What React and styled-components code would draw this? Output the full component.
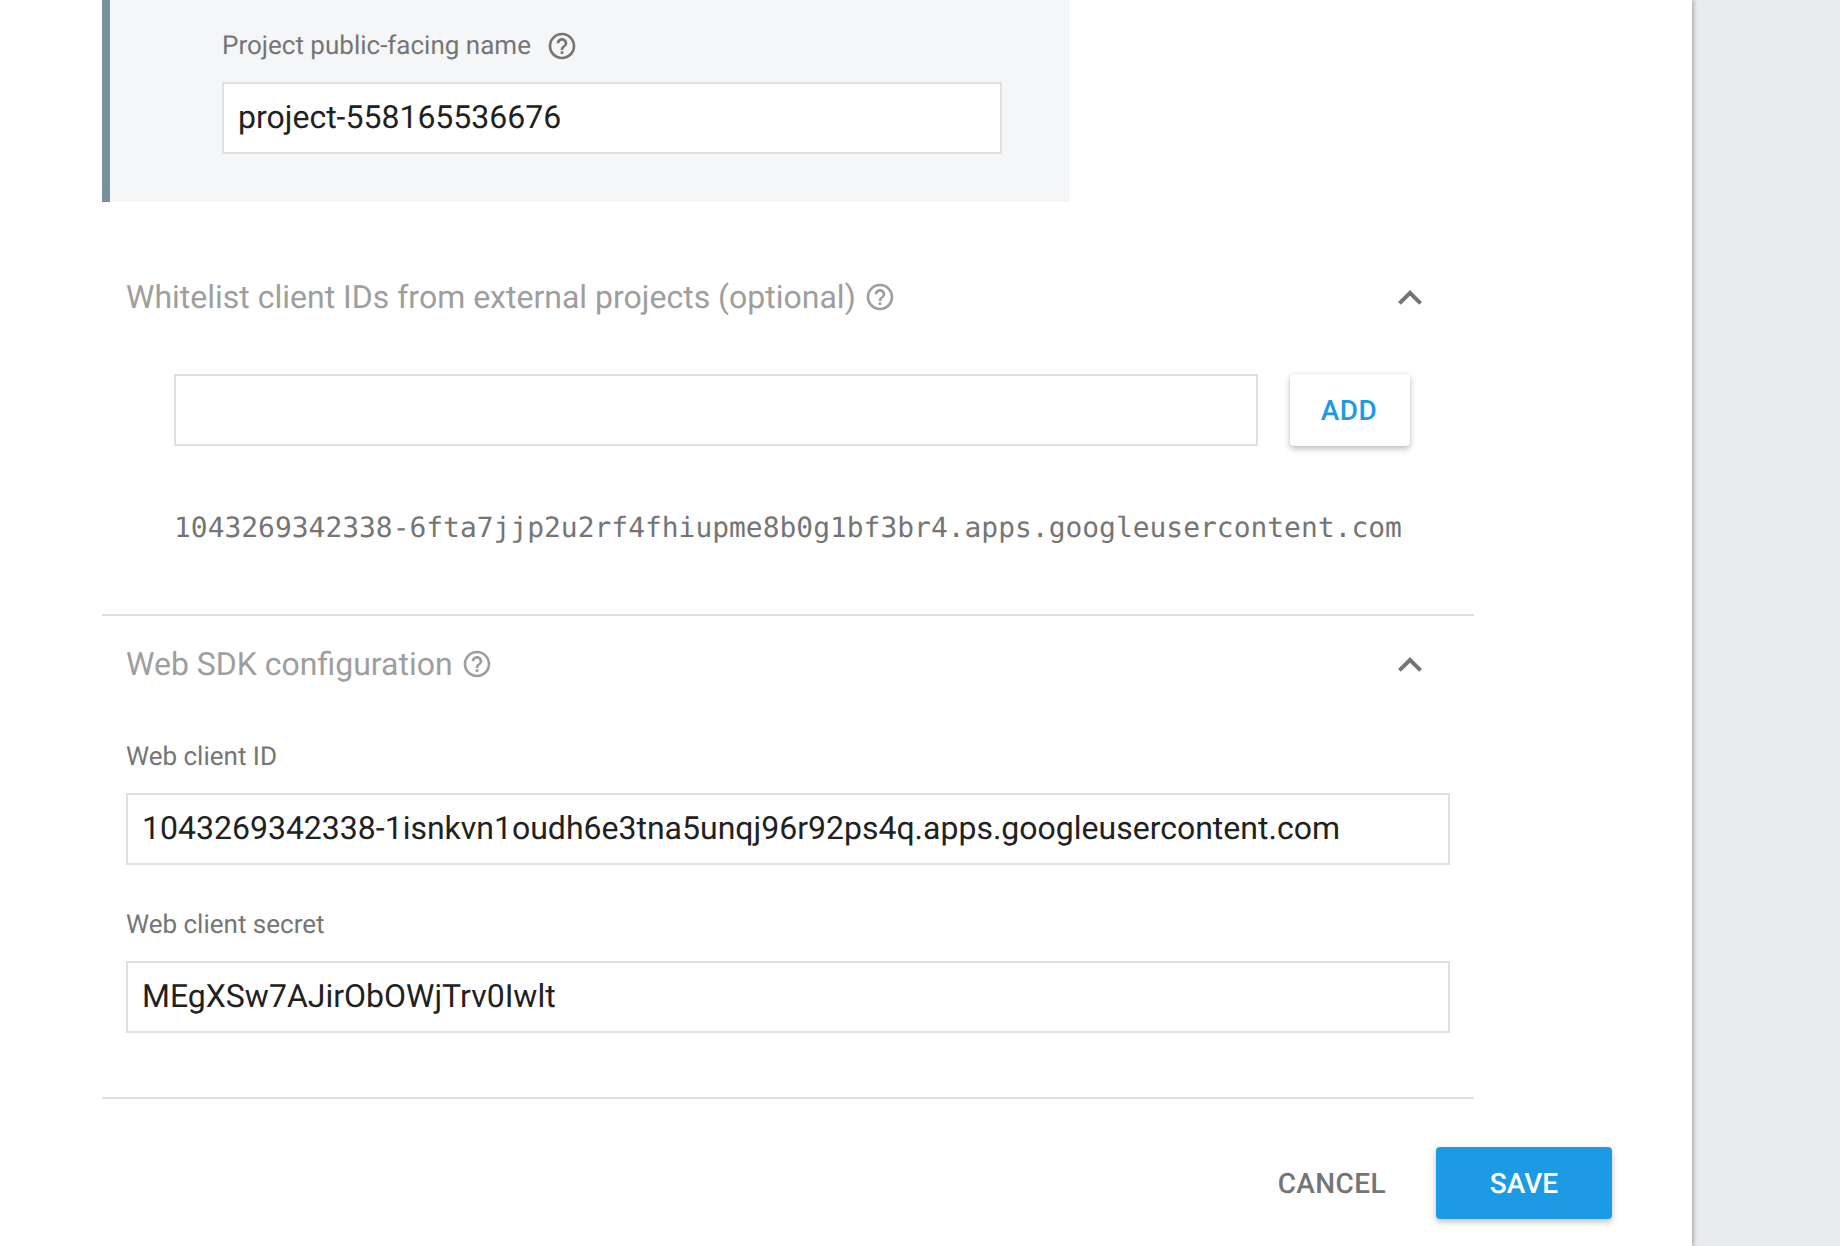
import React from "react";
import styled, { createGlobalStyle } from "styled-components";
import { MdHelpOutline, MdExpandLess } from "react-icons/md";

const Global = createGlobalStyle`
  html, body { margin: 0; padding: 0; height: 100%; background: #e8ecef; overflow: hidden; }
  body {
    font-family: Roboto, "Liberation Sans", sans-serif;
    text-rendering: geometricPrecision;
  }
`;

const Page = styled.div`
  display: flex;
  height: 1246px;
  background: #e8ecef;
`;

const Sheet = styled.main`
  width: 1692px;
  height: 1246px;
  box-sizing: border-box;
  padding-left: 102px;
  background: #fff;
  box-shadow: 2px 0 4px rgba(0, 0, 0, 0.25);
  display: flex;
  flex-direction: column;
`;

const NamePanel = styled.section`
  width: 968px;
  height: 202px;
  box-sizing: border-box;
  padding: 28px 0 0 112px;
  background: #f5f6f8;
  border-left: 8px solid #78909c;
`;

const FieldLabel = styled.label`
  display: flex;
  align-items: center;
  gap: 15px;
  height: 36px;
  font-size: 26px;
  line-height: 36px;
  color: #757575;
  margin-bottom: ${(p) => p.$gap ?? 18}px;
`;

const HelpIcon = styled(MdHelpOutline)`
  width: 32px;
  height: 32px;
  color: #757575;
  flex: none;
`;

const TextBox = styled.div`
  box-sizing: border-box;
  width: ${(p) => p.$width}px;
  height: 72px;
  padding: 0 14px 2px;
  display: flex;
  align-items: center;
  background: #fff;
  border: 2px solid #e0e0e0;
  font-size: 32px;
  color: #212121;
  white-space: nowrap;
`;

const Section = styled.section`
  width: 1372px;
  box-sizing: border-box;
  padding: ${(p) => p.$top}px 0 0 24px;
  height: ${(p) => p.$height}px;
  border-bottom: 2px solid #e0e0e0;
`;

const SectionHead = styled.header`
  display: flex;
  align-items: center;
  height: 48px;
  width: 1308px;
`;

const SectionTitle = styled.h2`
  margin: 0;
  font-size: 32px;
  font-weight: 400;
  line-height: 48px;
  color: #9e9e9e;
  white-space: nowrap;
`;

const TitleHelp = styled(MdHelpOutline)`
  width: 32px;
  height: 32px;
  margin-left: 8px;
  color: #9e9e9e;
  flex: none;
`;

const Chevron = styled(MdExpandLess)`
  width: 48px;
  height: 48px;
  margin-left: auto;
  position: relative;
  top: 1px;
  color: #757575;
  flex: none;
`;

const AddRow = styled.div`
  display: flex;
  align-items: center;
  gap: 32px;
  margin: 53px 0 0 48px;
`;

const AddButton = styled.button`
  width: 120px;
  height: 72px;
  padding: 0 2px 0 0;
  border: 0;
  border-radius: 4px;
  background: #fff;
  color: #1c9be4;
  font: 500 28px Roboto, sans-serif;
  text-rendering: geometricPrecision;
  letter-spacing: 0.5px;
  box-shadow: 0 3px 6px rgba(0, 0, 0, 0.25), 0 0 2px rgba(0, 0, 0, 0.1);
`;

const ClientId = styled.div`
  margin: 61px 0 0 48px;
  height: 42px;
  font: 400 27.95px/42px "DejaVu Sans Mono", monospace;
  color: #757575;
  white-space: nowrap;
`;

const Field = styled.div`
  margin-top: ${(p) => p.$top}px;
`;

const Actions = styled.footer`
  display: flex;
  align-items: center;
  justify-content: flex-end;
  gap: 50px;
  width: 1510px;
  height: 72px;
  margin-top: 48px;
`;

const CancelButton = styled.button`
  border: 0;
  padding: 0;
  background: none;
  color: #757575;
  font: 500 28px Roboto, sans-serif;
  text-rendering: geometricPrecision;
  letter-spacing: 0.4px;
`;

const SaveButton = styled.button`
  width: 176px;
  height: 72px;
  padding: 0;
  border: 0;
  border-radius: 4px;
  background: #1c9be4;
  color: #fff;
  font: 500 28px Roboto, sans-serif;
  text-rendering: geometricPrecision;
  box-shadow: 0 3px 6px rgba(0, 0, 0, 0.25);
`;

export default function App() {
  return (
    <>
      <Global />
      <Page>
        <Sheet>
          <NamePanel>
            <FieldLabel>
              Project public-facing name <HelpIcon />
            </FieldLabel>
            <TextBox $width={780}>project-558165536676</TextBox>
          </NamePanel>
          <Section $top={71} $height={414}>
            <SectionHead>
              <SectionTitle>Whitelist client IDs from external projects (optional)</SectionTitle>
              <TitleHelp />
              <Chevron />
            </SectionHead>
            <AddRow>
              <TextBox $width={1084} />
              <AddButton>ADD</AddButton>
            </AddRow>
            <ClientId>1043269342338-6fta7jjp2u2rf4fhiupme8b0g1bf3br4.apps.googleusercontent.com</ClientId>
          </Section>
          <Section $top={24} $height={483}>
            <SectionHead>
              <SectionTitle>Web SDK configuration</SectionTitle>
              <TitleHelp />
              <Chevron />
            </SectionHead>
            <Field $top={51}>
              <FieldLabel $gap={18}>Web client ID</FieldLabel>
              <TextBox $width={1324}>1043269342338-1isnkvn1oudh6e3tna5unqj96r92ps4q.apps.googleusercontent.com</TextBox>
            </Field>
            <Field $top={42}>
              <FieldLabel $gap={18}>Web client secret</FieldLabel>
              <TextBox $width={1324}>MEgXSw7AJirObOWjTrv0Iwlt</TextBox>
            </Field>
          </Section>
          <Actions>
            <CancelButton>CANCEL</CancelButton>
            <SaveButton>SAVE</SaveButton>
          </Actions>
        </Sheet>
      </Page>
    </>
  );
}
